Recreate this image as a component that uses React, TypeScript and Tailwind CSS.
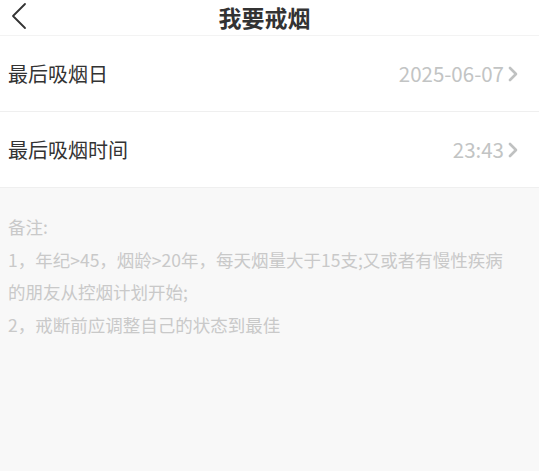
const FONT = "font-['Noto_Sans_CJK_SC','Noto_Sans',sans-serif]"

function Row({ label, value }: { label: string; value: string }) {
  return (
    <div className="flex h-[76px] items-center justify-between border-b border-[#efefef] pl-2 pr-[21px]">
      <span className="text-[20px] text-[#333333]">{label}</span>
      <div className="flex items-center gap-[4px]">
        <span className="text-[20.5px] text-[#c2c4c4]">{value}</span>
        <svg width="10" height="16" viewBox="0 0 10 16" fill="none">
          <path d="M2 2 L8 8 L2 14" stroke="#bfc1c1" strokeWidth="2.6" strokeLinecap="round" strokeLinejoin="round" />
        </svg>
      </div>
    </div>
  )
}

export default function App() {
  return (
    <div className={`flex h-[471px] w-[539px] flex-col bg-[#f8f8f8] ${FONT}`}>
      <div className="bg-white">
        <div className="relative flex h-[36px] items-center justify-center border-b border-[#f3f3f3] pr-[10px]">
          <svg className="absolute left-[10px] top-[2px]" width="20" height="28" viewBox="0 0 20 28" fill="none">
            <path d="M15 2 L3 14 L15 26" stroke="#333333" strokeWidth="1.8" strokeLinecap="round" strokeLinejoin="round" />
          </svg>
          <span className="text-[23px] font-bold leading-none text-[#333333]">我要戒烟</span>
        </div>
        <Row label="最后吸烟日" value="2025-06-07" />
        <Row label="最后吸烟时间" value="23:43" />
      </div>
      <div className="pl-2 pr-[23px] pt-[23px] text-[17.5px] leading-[32.5px] text-[#c9c9c9]">
        <p>备注:</p>
        <p>1，年纪&gt;45，烟龄&gt;20年，每天烟量大于15支;又或者有慢性疾病的朋友从控烟计划开始;</p>
        <p>2，戒断前应调整自己的状态到最佳</p>
      </div>
    </div>
  )
}
